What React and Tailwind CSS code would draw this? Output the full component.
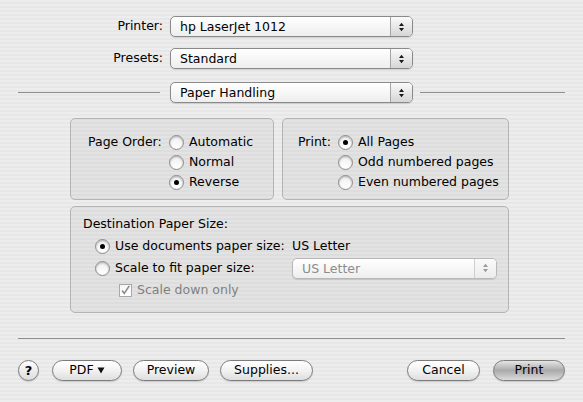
import React from 'react'

const Arrows = ({ color = '#1a1a1a' }) => (
  <svg width="7" height="12" viewBox="0 0 7 12">
    <path d="M3.5 1.8 L6 5 H1Z M1 7 H6 L3.5 10.2Z" fill={color} />
  </svg>
)

function Popup({ label, className, disabled }) {
  return (
    <div
      className={`flex h-[21px] items-stretch rounded-[5px] border bg-linear-to-b from-white to-[#eeeeee] shadow-[0_1px_1px_rgba(0,0,0,0.12)] ${
        disabled ? 'border-[#b8b8b8] text-[#8c8c8c]' : 'border-[#8a8a8a] text-black'
      } ${className}`}
    >
      <span className="flex-1 pl-[9px] leading-[20px]">{label}</span>
      <span
        className={`flex w-[22px] items-center justify-center rounded-r-[4px] border-l bg-linear-to-b ${
          disabled ? 'border-[#cfcfcf] from-[#fafafa] to-[#ececec]' : 'border-[#a6a6a6] from-[#fafafa] to-[#d6d6d6]'
        }`}
      >
        <Arrows color={disabled ? '#9a9a9a' : '#1a1a1a'} />
      </span>
    </div>
  )
}

function Radio({ on, label }) {
  return (
    <div className="flex h-[20px] items-center gap-[5px]">
      <span className="flex h-[15px] w-[15px] items-center justify-center rounded-full border border-[#8c8c8c] bg-linear-to-b from-[#f0f0f0] to-[#ffffff] shadow-[inset_0_1px_2px_rgba(0,0,0,0.28)]">
        {on && <span className="h-[5px] w-[5px] rounded-full bg-black" />}
      </span>
      <span>{label}</span>
    </div>
  )
}

function Button({ children, className, primary }) {
  return (
    <div
      className={`flex h-[21px] items-center justify-center rounded-full border border-[#7c7c7c] bg-linear-to-b shadow-[0_1px_1px_rgba(0,0,0,0.15)] ${
        primary ? 'from-[#e6e6e6] via-[#aaaaaa] to-[#dcdcdc]' : 'from-white via-[#f2f2f2] to-[#dedede]'
      } ${className}`}
    >
      {children}
    </div>
  )
}

export default function App() {
  return (
    <div className="h-[402px] w-[583px] overflow-hidden bg-[repeating-linear-gradient(to_bottom,#ededed_0px,#ededed_2px,#e7e7e7_2px,#e7e7e7_4px)] font-['DejaVu_Sans',sans-serif] text-[12.5px] text-black">
      {/* Printer / Presets */}
      <div className="grid grid-cols-[163px_243px] items-center gap-x-[7px] gap-y-[11px] pt-[16px]">
        <span className="text-right">Printer:</span>
        <Popup label="hp LaserJet 1012" className="w-[243px]" />
        <span className="text-right">Presets:</span>
        <Popup label="Standard" className="w-[243px]" />
      </div>

      {/* Pane selector */}
      <div className="mt-[13px] flex items-center px-[18px]">
        <div className="h-px w-[142px] bg-[#8e8e8e]" />
        <Popup label="Paper Handling" className="ml-[10px] w-[243px]" />
        <div className="ml-[7px] h-px flex-1 bg-[#8e8e8e]" />
      </div>

      {/* Order / Print boxes */}
      <div className="mt-[15px] flex gap-[8px] pl-[70px]">
        <div className="flex h-[82px] w-[204px] rounded-[5px] border border-[#b4b4b4] bg-black/[0.04] pl-[17px] pt-[13px]">
          <span className="w-[81px] leading-[20px]">Page Order:</span>
          <div className="flex flex-col">
            <Radio label="Automatic" />
            <Radio label="Normal" />
            <Radio on label="Reverse" />
          </div>
        </div>
        <div className="flex h-[82px] w-[227px] rounded-[5px] border border-[#b4b4b4] bg-black/[0.04] pl-[15px] pt-[13px]">
          <span className="w-[40px] leading-[20px]">Print:</span>
          <div className="flex flex-col">
            <Radio on label="All Pages" />
            <Radio label="Odd numbered pages" />
            <Radio label="Even numbered pages" />
          </div>
        </div>
      </div>

      {/* Destination paper size */}
      <div className="ml-[70px] mt-[6px] h-[107px] w-[439px] rounded-[5px] border border-[#b4b4b4] bg-black/[0.04] pl-[12px] pt-[6px]">
        <div className="flex h-[22px] items-center">Destination Paper Size:</div>
        <div className="flex h-[22px] items-center pl-[12px]">
          <div className="w-[197px]">
            <Radio on label="Use documents paper size:" />
          </div>
          <span>US Letter</span>
        </div>
        <div className="flex h-[22px] items-center pl-[12px]">
          <div className="w-[197px]">
            <Radio label="Scale to fit paper size:" />
          </div>
          <Popup label="US Letter" disabled className="w-[205px]" />
        </div>
        <div className="flex h-[22px] items-center gap-[5px] pl-[36px] text-[#808080]">
          <span className="flex h-[13px] w-[13px] items-center justify-center border border-[#a8a8a8] bg-linear-to-b from-[#f6f6f6] to-white">
            <svg width="13" height="13" viewBox="0 0 13 13">
              <path d="M2.5 6.5 L5 10 L11 1" fill="none" stroke="#8a8a8a" strokeWidth="1.8" />
            </svg>
          </span>
          <span>Scale down only</span>
        </div>
      </div>

      {/* Separator */}
      <div className="mx-[18px] mt-[25px] h-px bg-[#8e8e8e]" />

      {/* Buttons */}
      <div className="mt-[21px] flex items-center px-[18px]">
        <div className="flex h-[21px] w-[21px] items-center justify-center rounded-full border border-[#7c7c7c] bg-linear-to-b from-white to-[#dcdcdc] text-[13px] font-bold shadow-[0_1px_1px_rgba(0,0,0,0.15)]">
          ?
        </div>
        <Button className="ml-[13px] w-[70px] gap-[3px]">
          PDF
          <svg width="8" height="7" viewBox="0 0 8 7">
            <path d="M0.5 0.5 H7.5 L4 6.5Z" fill="#111" />
          </svg>
        </Button>
        <Button className="ml-[11px] w-[76px]">Preview</Button>
        <Button className="ml-[11px] w-[93px]">Supplies...</Button>
        <div className="flex-1" />
        <Button className="w-[73px]">Cancel</Button>
        <Button primary className="ml-[13px] w-[72px]">Print</Button>
      </div>
    </div>
  )
}
